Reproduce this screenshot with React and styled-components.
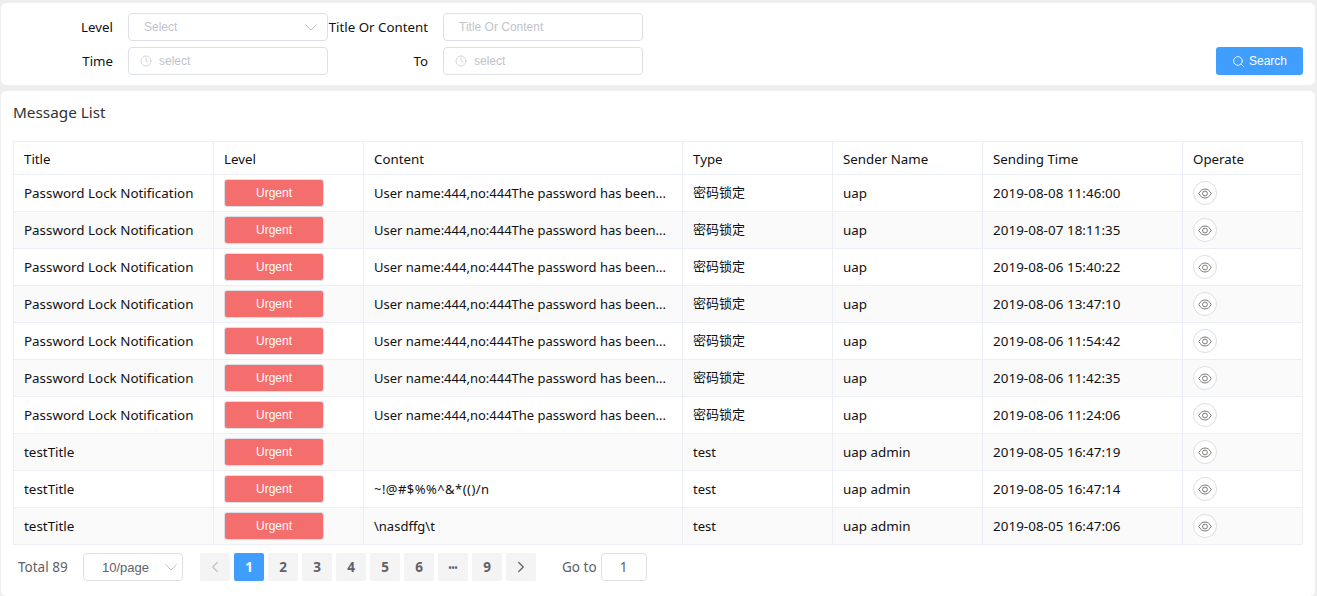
import React from "react";
import styled, { createGlobalStyle } from "styled-components";
import { ChevronLeft, ChevronRight, Clock, Search } from "lucide-react";

const Global = createGlobalStyle`
  html, body { margin: 0; padding: 0; height: 596px; overflow: hidden; background: #eeeeee; }
  * { box-sizing: border-box; }
  body { font-family: "Noto Sans", "Noto Sans CJK SC", sans-serif; color: #111; }
`;
const Page = styled.div`
  padding: 3px 2px 0 1px;
  display: flex;
  flex-direction: column;
  gap: 6px;
  height: 596px;
`;
const Card = styled.section`
  background: #fff;
  border-radius: 5px;
`;
const FilterCard = styled(Card)`
  height: 82px;
  padding: 10px 12px 0 12px;
  display: grid;
  grid-template-columns: 115px 200px 115px 200px 1fr 87px;
  row-gap: 6px;
  grid-template-rows: 28px 28px;
`;
const Label = styled.label`
  font-size: 13.3px;
  line-height: 28px;
  text-align: right;
  white-space: nowrap;
  padding-right: 15px;
  color: #111;
`;
const Field = styled.div`
  height: 28px;
  border: 1px solid #dcdfe6;
  border-radius: 4px;
  display: flex;
  align-items: center;
  justify-content: space-between;
  padding: 0 15px;
  font: 12px "Liberation Sans", sans-serif;
  color: #c0c4cc;
  background: #fff;
`;
const IconText = styled.span`
  display: flex;
  align-items: center;
  gap: 7px;
  margin-left: -4px;
`;
const SelectArrow = styled.svg`
  width: 12px;
  height: 7px;
  fill: none;
  stroke: #c0c4cc;
  stroke-width: 1;
  margin-right: ${p => p.$offset || 0}px;
`;
const SearchButton = styled.button`
  grid-column: 6;
  height: 28px;
  border: 0;
  border-radius: 3px;
  background: #409eff;
  color: #fff;
  font: 12px "Liberation Sans", sans-serif;
  display: flex;
  align-items: center;
  justify-content: center;
  gap: 4px;
  padding: 0;
`;
const Spacer = styled.div``;
const ListCard = styled(Card)`
  flex: 1;
  padding: 0 12px;
`;
const Heading = styled.h2`
  margin: 0;
  height: 50px;
  font-size: 15.3px;
  font-weight: 400;
  line-height: 42px;
  color: #303133;
`;
const Table = styled.table`
  width: 1289px;
  table-layout: fixed;
  border-collapse: collapse;
  font-size: 13.4px;
`;
const HeadCell = styled.th`
  height: 33px;
  padding: 1px 10px 0;
  text-align: left;
  font-weight: 400;
  border: 1px solid #ebeef5;
  color: #111;
  font-size: 13.3px;
`;
const Row = styled.tr`
  background: ${p => (p.$striped ? "#fafafa" : "#fff")};
`;
const Cell = styled.td`
  height: 37px;
  padding: 0 10px;
  border: 1px solid #ebeef5;
  white-space: nowrap;
  color: #111;
`;
const ContentCell = styled(Cell)`
  font-size: 13px;
  letter-spacing: ${p => (p.$symbols ? "0.45px" : "0")};
`;
const TypeCell = styled(Cell)`
  font-size: 13px;
  line-height: 16px;
  padding-bottom: ${p => (p.$cjk ? "2px" : "0")};
`;
const TimeCell = styled(Cell)`
  letter-spacing: 0.05px;
`;
const LevelBadge = styled.div`
  width: 100px;
  height: 28px;
  background: #f56c6c;
  opacity: 0.98;
  border: 1px solid #dcdfe6;
  border-radius: 3px;
  color: #fff;
  font: 12px/26px "Liberation Sans", sans-serif;
  text-align: center;
`;
const RoundButton = styled.button`
  width: 24px;
  height: 24px;
  display: flex;
  align-items: center;
  justify-content: center;
  padding: 0;
  border: 1px solid #dcdfe6;
  border-radius: 50%;
  background: #fff;
  color: #7d7a78;
`;
const Pager = styled.nav`
  display: flex;
  align-items: center;
  height: 28px;
  margin-top: 8px;
  padding-left: 5px;
  font-size: 13.5px;
  color: #606266;
`;
const Total = styled.span`
  width: 65px;
`;
const PageSize = styled(Field)`
  width: 100px;
  padding: 0 6px 0 18px;
  font: 13px "Liberation Sans", sans-serif;
  color: #606266;
  margin-right: 17px;
`;
const PageButton = styled.button`
  width: 30px;
  height: 28px;
  margin-right: 4px;
  padding: 0;
  border: 0;
  border-radius: 2px;
  display: flex;
  align-items: center;
  justify-content: center;
  background: ${p => (p.$active ? "#409eff" : "#f4f4f5")};
  color: ${p => (p.$active ? "#fff" : p.$disabled ? "#c0c4cc" : "#606266")};
  font: 700 13.5px "Noto Sans", sans-serif;
`;
const Dots = styled.span`
  font-size: 8px;
`;
const GoTo = styled.span`
  margin-left: 22px;
  margin-right: 4px;
`;
const GoInput = styled.div`
  width: 46px;
  height: 28px;
  border: 1px solid #dcdfe6;
  border-radius: 4px;
  text-align: center;
  line-height: 26px;
  color: #606266;
`;

const EyeIcon = () => (
  <svg width="14" height="11" viewBox="0 0 14 11" fill="none" stroke="currentColor" strokeWidth="1">
    <path d="M0.8 5.5C2.3 2.6 4.4 1 7 1s4.7 1.6 6.2 4.5C11.7 8.4 9.6 10 7 10S2.3 8.4.8 5.5Z" />
    <circle cx="7" cy="5.5" r="2.4" />
  </svg>
);
const Arrow = ({ offset }) => (
  <SelectArrow viewBox="0 0 12 7" $offset={offset}>
    <path d="M.5.5 6 6 11.5.5" />
  </SelectArrow>
);

const pw = "Password Lock Notification";
const lock = "密码锁定";
const msg = "User name:444,no:444The password has been...";
const rows = [
  [pw, msg, lock, "uap", "2019-08-08 11:46:00"],
  [pw, msg, lock, "uap", "2019-08-07 18:11:35"],
  [pw, msg, lock, "uap", "2019-08-06 15:40:22"],
  [pw, msg, lock, "uap", "2019-08-06 13:47:10"],
  [pw, msg, lock, "uap", "2019-08-06 11:54:42"],
  [pw, msg, lock, "uap", "2019-08-06 11:42:35"],
  [pw, msg, lock, "uap", "2019-08-06 11:24:06"],
  ["testTitle", "", "test", "uap admin", "2019-08-05 16:47:19"],
  ["testTitle", "~!@#$%%^&*(()/n", "test", "uap admin", "2019-08-05 16:47:14"],
  ["testTitle", "\\nasdffg\\t", "test", "uap admin", "2019-08-05 16:47:06"],
];
const widths = [200, 150, 319, 150, 150, 200, 120];
const heads = ["Title", "Level", "Content", "Type", "Sender Name", "Sending Time", "Operate"];

const TimeField = () => (
  <Field>
    <IconText><Clock size={12} strokeWidth={1.4} />select</IconText>
  </Field>
);

export default function App() {
  return (
    <>
      <Global />
      <Page>
        <FilterCard>
          <Label>Level</Label>
          <Field>Select<Arrow offset={-5} /></Field>
          <Label>Title Or Content</Label>
          <Field>Title Or Content</Field>
          <Spacer />
          <Spacer />
          <Label>Time</Label>
          <TimeField />
          <Label>To</Label>
          <TimeField />
          <Spacer />
          <SearchButton><Search size={13} strokeWidth={1.6} />Search</SearchButton>
        </FilterCard>
        <ListCard>
          <Heading>Message List</Heading>
          <Table>
            <colgroup>{widths.map((w, i) => <col key={i} style={{ width: w }} />)}</colgroup>
            <thead>
              <tr>{heads.map(h => <HeadCell key={h}>{h}</HeadCell>)}</tr>
            </thead>
            <tbody>
              {rows.map((r, i) => (
                <Row key={i} $striped={i % 2 === 1}>
                  <Cell>{r[0]}</Cell>
                  <Cell><LevelBadge>Urgent</LevelBadge></Cell>
                  <ContentCell $symbols={r[1].startsWith("~")}>{r[1]}</ContentCell>
                  <TypeCell $cjk={r[2] === lock}>{r[2]}</TypeCell>
                  <Cell>{r[3]}</Cell>
                  <TimeCell>{r[4]}</TimeCell>
                  <Cell><RoundButton><EyeIcon /></RoundButton></Cell>
                </Row>
              ))}
            </tbody>
          </Table>
          <Pager>
            <Total>Total 89</Total>
            <PageSize>10/page<Arrow offset={-1} /></PageSize>
            <PageButton $disabled><ChevronLeft size={18} strokeWidth={1.7} /></PageButton>
            <PageButton $active>1</PageButton>
            {["2", "3", "4", "5", "6"].map(p => <PageButton key={p}>{p}</PageButton>)}
            <PageButton><Dots>•••</Dots></PageButton>
            <PageButton>9</PageButton>
            <PageButton><ChevronRight size={18} strokeWidth={1.7} /></PageButton>
            <GoTo>Go to</GoTo>
            <GoInput>1</GoInput>
          </Pager>
        </ListCard>
      </Page>
    </>
  );
}
